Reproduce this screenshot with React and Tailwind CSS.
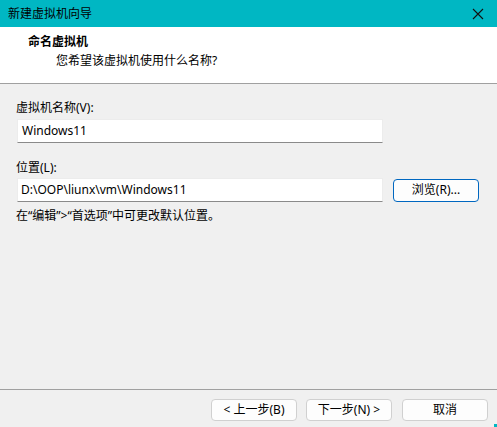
const font = { fontFamily: '"Noto Sans", "Noto Sans CJK SC", sans-serif' };

const Btn = ({ children, primary, className = "" }) => (
  <button
    className={`flex items-center justify-center h-[22px] rounded-[4px] bg-[#fdfdfd] text-[12px] text-black leading-none ${
      primary ? "border border-[#0067c0]" : "border border-[#d0d0d0]"
    } ${className}`}
  >
    {children}
  </button>
);

export default function App() {
  return (
    <div
      className="w-[497px] h-[427px] flex flex-col bg-[#f0f0f0] text-black overflow-hidden"
      style={font}
    >
      {/* title bar */}
      <div className="h-[27px] bg-[#00b7c3] flex items-center justify-between pl-[8px] pr-[13px] shrink-0">
        <span className="text-[12px] text-black">新建虚拟机向导</span>
        <svg width="12" height="12" viewBox="0 0 12 12">
          <path d="M1 1L11 11M11 1L1 11" stroke="#111" strokeWidth="1.1" />
        </svg>
      </div>

      {/* header */}
      <div className="h-[57px] bg-white border-b border-[#a0a0a0] pt-[6px] shrink-0">
        <div className="pl-[28px] text-[12px] font-bold leading-[18px]">命名虚拟机</div>
        <div className="pl-[56px] text-[12px] leading-[18px] mt-[1px]">您希望该虚拟机使用什么名称?</div>
      </div>

      {/* body */}
      <div className="flex-1 flex flex-col px-[16px] pt-[15px]">
        <label className="text-[12px] leading-[18px]">虚拟机名称(V):</label>
        <div className="mt-[2px] w-[366px] h-[24px] ml-[1px] bg-white border border-[#ececec] border-b-[#8a8a8a] flex items-center px-[4px] text-[12px]">
          Windows11
        </div>

        <label className="mt-[16px] text-[12px] leading-[18px]">位置(L):</label>
        <div className="mt-[1px] flex items-center gap-[10px]">
          <div className="w-[366px] h-[24px] ml-[1px] bg-white border border-[#ececec] border-b-[#8a8a8a] flex items-center px-[3px] text-[12px]">
            D:\OOP\liunx\vm\Windows11
          </div>
          <Btn primary className="w-[86px] h-[23px]">浏览(R)...</Btn>
        </div>
        <div className="mt-[5px] text-[12px] leading-[18px]">在“编辑”&gt;“首选项”中可更改默认位置。</div>
      </div>

      {/* footer */}
      <div className="h-[38px] border-t border-[#a0a0a0] flex items-start justify-end pt-[9px] pr-[9px] gap-[9px] shrink-0 relative">
        <Btn className="w-[86px]">&lt; 上一步(B)</Btn>
        <Btn className="w-[86px]">下一步(N) &gt;</Btn>
        <Btn className="w-[86px] ml-[1px]">取消</Btn>
        <div className="absolute right-0 bottom-0 w-[3px] h-[3px] bg-[#00b7c3]" />
      </div>
    </div>
  );
}
